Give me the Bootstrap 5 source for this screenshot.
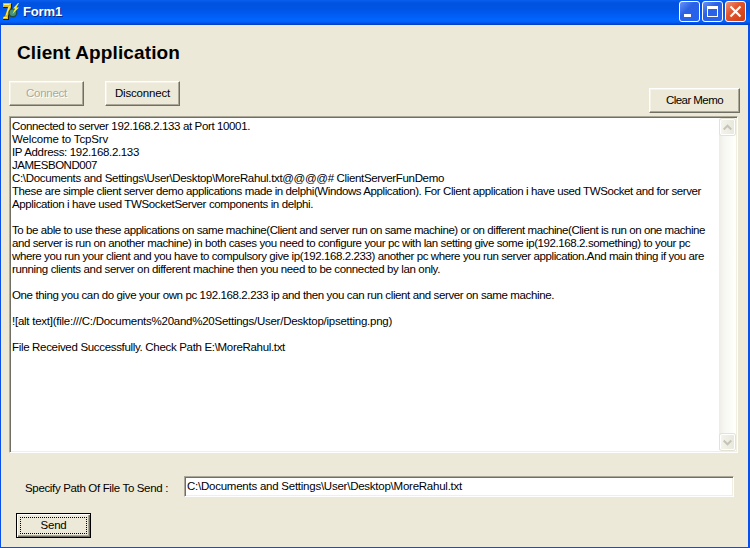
<!DOCTYPE html>
<html lang="en">
<head>
<meta charset="utf-8">
<meta name="viewport" content="width=device-width, initial-scale=1">
<title>Form1</title>
<link href="https://cdn.jsdelivr.net/npm/bootstrap@5.3.0/dist/css/bootstrap.min.css" rel="stylesheet">
<style>
  body { width: 750px; height: 548px; overflow: hidden; font: 11.5px/13px "Liberation Sans", Arial, sans-serif; color: #000; }
  .xp-window { width: 750px; height: 548px; background: #ece9d8; border: solid #0a50e4; border-width: 0 2px 1px 1px; }
  .xp-title { height: 25px; margin: 0 -2px 0 -1px; padding: 0 4px 0 2px; background: linear-gradient(#0a5ff0 0, #0053e0 3px, #0054e4 9px, #005cf4 15px, #0066ff 20px, #0061fa 22px, #0047d4 24px, #003dbc 25px); }
  .xp-icon { margin-top: 3px; }
  .xp-caption { font: bold 13px/16px "Liberation Sans", Arial, sans-serif; color: #fff; text-shadow: 1px 1px 0 #0a2a80; margin: 4px 0 0 3px; }
  .xp-controls { gap: 2px; padding-top: 1px; }
  .form-title { font: bold 19px/24px "Liberation Sans", Arial, sans-serif; margin: 16px 0 0 16px; }
  .xp-btn { height: 25px; padding: 0 0 1px; border: 1px solid; border-color: #fff #716f64 #716f64 #fff; border-radius: 0; background: #ece9d8; box-shadow: inset -1px -1px 0 #aca899, inset 1px 1px 0 #f5f3e9; font-size: 11.5px; line-height: 13px; color: #000; }
  .xp-btn:disabled { color: #aca899; text-shadow: 1px 1px 0 #fff; opacity: 1; background: #ece9d8; border-color: #fff #716f64 #716f64 #fff; }
  .w-std { width: 75px; }
  .w-clear { width: 91px; margin-top: 7px; }
  .top-row { margin: 16px 8px 0 8px; height: 35px; }
  .top-row .w-std + .w-std { margin-left: 21px; }
  .sunken { background: #fff; border: 1px solid; border-color: #aca899 #fff #fff #aca899; box-shadow: inset 1px 1px 0 #716f64, inset -1px -1px 0 #f1efe2; }
  .memo-box { width: 729px; height: 337px; margin-left: 8px; padding: 2px 1px 2px 2px; }
  .memo-text { min-width: 0; padding-top: 1px; }
  .fit-line { height: 13px; white-space: pre; }
  .scroll-track { width: 17px; background: linear-gradient(90deg, #eeede5, #f6f6f2 5px, #fefefb 15px); }
  .scroll-end { width: 15px; height: 16px; margin: 0 1px; border: 1px solid #fff; border-radius: 2px; background: linear-gradient(90deg, #f4f3ec, #e9e8dc); box-shadow: 0 0 0 1px #e4e2d4; }
  .path-row { margin: 23px 0 0 24px; }
  .path-label { width: 159px; padding-top: 6px; }
  .path-edit { width: 550px; height: 21px; padding: 3px 0 0 2px; }
  .send-btn { margin: 16px 0 0 15px; border-color: #000; box-shadow: inset 1px 1px 0 #fff, inset -1px -1px 0 #716f64, inset -2px -2px 0 #aca899; position: relative; }
  .send-btn::after { content: ""; position: absolute; inset: 3px; border: 1px dotted #000; }
</style>
<script src="https://cdn.jsdelivr.net/npm/bootstrap@5.3.0/dist/js/bootstrap.bundle.min.js"></script>
</head>
<body>
<main class="xp-window d-flex flex-column">
  <header class="xp-title d-flex flex-shrink-0">
    <svg width="18" height="18" viewBox="0 0 18 18" class="xp-icon flex-shrink-0">
      <path d="M1 1h9v4L7 13v4H1v-3l2-1L6 5H1z" fill="#241c08"/>
      <path d="M1 0h8v4L6 13v3H1v-2l2-1L6 4H1z" fill="#e0be1c"/>
      <path d="M2 1.500h5.500M7.500 3 4.500 12M2 14.500h3" stroke="#fff07a" fill="none"/>
      <circle cx="10.800" cy="10" r="4.500" fill="#1d4b45"/>
      <circle cx="10.800" cy="9.800" r="3.200" fill="#479379"/>
      <path d="M16 0l-5 5.500h2l-2.500 5.500 6.500-6.500h-2.500l2.500-4.500z" fill="#ffef18"/>
    </svg>
    <div class="xp-caption" data-w="39"><span>Form1</span></div>
    <div class="xp-controls d-flex align-items-start ms-auto">
      <svg viewBox="0 0 21 21" width="21" height="21">
        <defs>
          <linearGradient id="blue" x1="0" y1="0" x2="1" y2="1"><stop offset="0" stop-color="#6c97f6"/><stop offset=".4" stop-color="#2b62e4"/><stop offset="1" stop-color="#2463f0"/></linearGradient>
          <linearGradient id="red" x1="0" y1="0" x2="1" y2="1"><stop offset="0" stop-color="#f09a80"/><stop offset=".4" stop-color="#e2552d"/><stop offset="1" stop-color="#cf3c10"/></linearGradient>
        </defs>
        <rect x=".5" y=".5" width="20" height="20" rx="2.500" fill="url(#blue)" stroke="#fff"/>
        <path d="M5 13h7v3H5z" fill="#fff"/>
      </svg>
      <svg viewBox="0 0 21 21" width="21" height="21">
        <rect x=".5" y=".5" width="20" height="20" rx="2.500" fill="url(#blue)" stroke="#fff"/>
        <path d="M5 5h11v11H5zM6 8v7h9V8z" fill="#fff" fill-rule="evenodd"/>
      </svg>
      <svg viewBox="0 0 21 21" width="21" height="21">
        <rect x=".5" y=".5" width="20" height="20" rx="2.500" fill="url(#red)" stroke="#fff"/>
        <path d="M5.500 5.500l10 10m0-10l-10 10" stroke="#fff" stroke-width="2.200"/>
      </svg>
    </div>
  </header>

  <h1 class="form-title" data-w="163"><span>Client Application</span></h1>

  <div class="top-row d-flex align-items-start flex-shrink-0">
    <button class="btn xp-btn w-std" disabled data-w="41"><span>Connect</span></button>
    <button class="btn xp-btn w-std" data-w="55"><span>Disconnect</span></button>
    <button class="btn xp-btn w-clear ms-auto" data-w="57"><span>Clear Memo</span></button>
  </div>

  <section class="memo-box sunken d-flex flex-shrink-0">
    <div class="memo-text flex-grow-1">
      <div class="fit-line" data-w="238"><span>Connected to server 192.168.2.133 at Port 10001.</span></div>
      <div class="fit-line" data-w="96"><span>Welcome to TcpSrv</span></div>
      <div class="fit-line" data-w="127"><span>IP Address: 192.168.2.133</span></div>
      <div class="fit-line" data-w="85"><span>JAMESBOND007</span></div>
      <div class="fit-line" data-w="432"><span>C:\Documents and Settings\User\Desktop\MoreRahul.txt@@@@# ClientServerFunDemo</span></div>
      <div class="fit-line" data-w="689"><span>These are simple client server demo applications made in delphi(Windows Application). For Client application i have used TWSocket and for server</span></div>
      <div class="fit-line" data-w="301"><span>Application i have used TWSocketServer components in delphi.</span></div>
      <div class="fit-line"></div>
      <div class="fit-line" data-w="693"><span>To be able to use these applications on same machine(Client and server run on same machine) or on different machine(Client is run on one machine</span></div>
      <div class="fit-line" data-w="678"><span>and server is run on another machine) in both cases you need to configure your pc with lan setting give some ip(192.168.2.something) to your pc</span></div>
      <div class="fit-line" data-w="692"><span>where you run your client and you have to compulsory give ip(192.168.2.233) another pc where you run server application.And main thing if you are</span></div>
      <div class="fit-line" data-w="428"><span>running clients and server on different machine then you need to be connected by lan only.</span></div>
      <div class="fit-line"></div>
      <div class="fit-line" data-w="542"><span>One thing you can do give your own pc 192.168.2.233 ip and then you can run client and server on same machine.</span></div>
      <div class="fit-line"></div>
      <div class="fit-line" data-w="380"><span>![alt text](file:///C:/Documents%20and%20Settings/User/Desktop/ipsetting.png)</span></div>
      <div class="fit-line"></div>
      <div class="fit-line" data-w="273"><span>File Received Successfully. Check Path E:\MoreRahul.txt</span></div>
    </div>
    <div class="scroll-track d-flex flex-column justify-content-between flex-shrink-0">
      <div class="scroll-end d-flex align-items-center justify-content-center"><svg width="9" height="7" viewBox="0 0 9 7"><path d="M.7 5.500l3.800-3.800 3.800 3.800" stroke="#c5c4b8" stroke-width="2" fill="none"/></svg></div>
      <div class="scroll-end d-flex align-items-center justify-content-center"><svg width="9" height="7" viewBox="0 0 9 7"><path d="M.7 1.500l3.800 3.800 3.800-3.800" stroke="#c5c4b8" stroke-width="2" fill="none"/></svg></div>
    </div>
  </section>

  <div class="path-row d-flex flex-shrink-0">
    <div class="path-label" data-w="143"><span>Specify Path Of File To Send :</span></div>
    <div class="path-edit sunken" data-w="275"><span>C:\Documents and Settings\User\Desktop\MoreRahul.txt</span></div>
  </div>

  <button class="btn xp-btn w-std send-btn flex-shrink-0" data-w="26"><span>Send</span></button>
</main>
<script>
  document.querySelectorAll('[data-w]').forEach(function (box) {
    var run = box.firstElementChild;
    var diff = Number(box.dataset.w) - run.getBoundingClientRect().width;
    run.style.letterSpacing = (diff / run.textContent.length) + 'px';
  });
</script>
</body>
</html>
